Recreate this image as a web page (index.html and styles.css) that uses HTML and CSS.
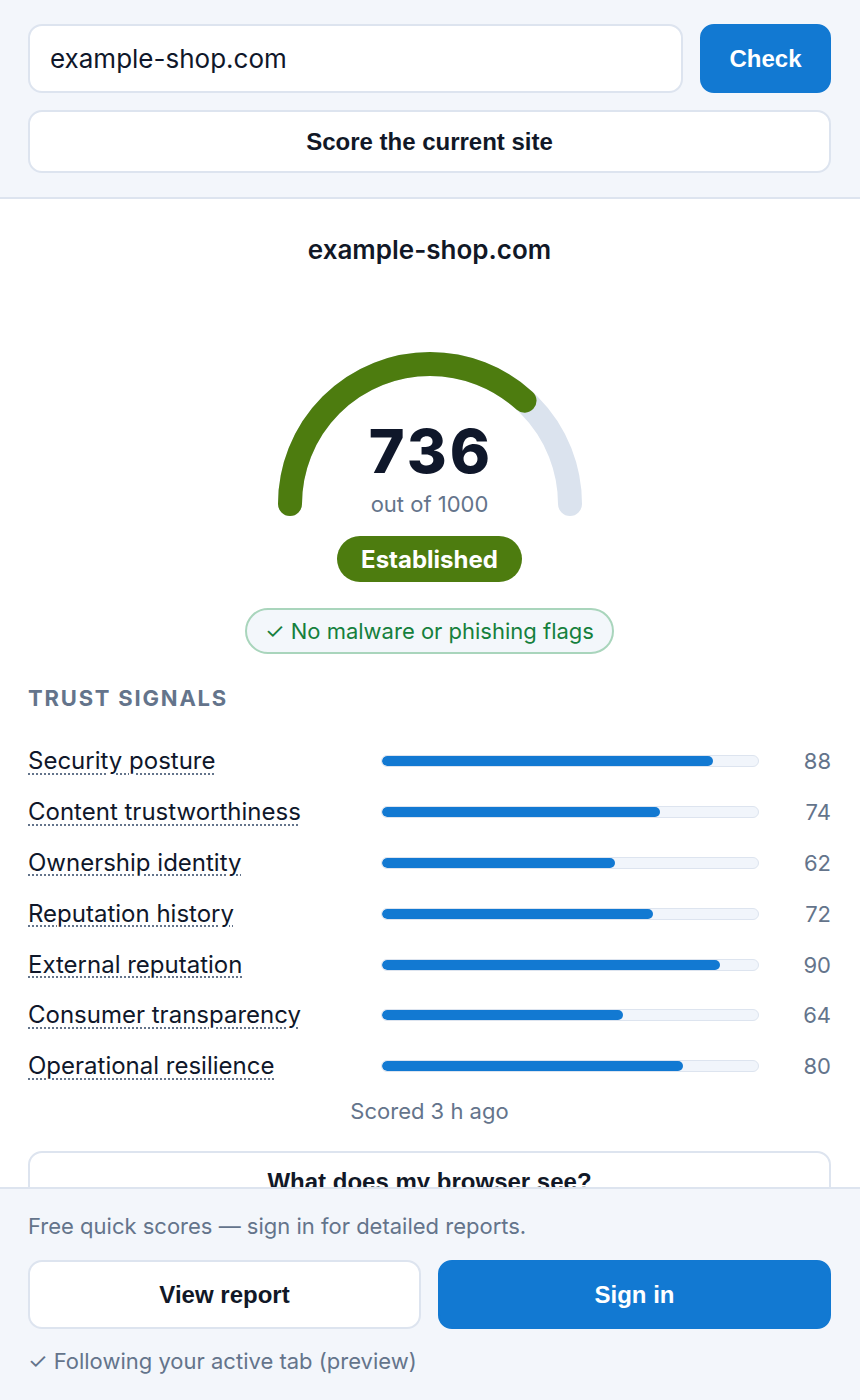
FILE: index.html
```html
<!DOCTYPE html>
<html lang="en">
<head>
    <meta charset="UTF-8">
    <meta name="viewport" content="width=device-width, initial-scale=1.0">
    <title>Site Trust Score</title>
    <link rel="stylesheet" href="styles.css">
</head>
<body>
    <header class="lookup">
        <div class="lookup-row">
            <input class="domain-input" type="text" value="example-shop.com">
            <button class="btn btn-primary check-btn">Check</button>
        </div>
        <button class="btn btn-outline wide-btn">Score the current site</button>
    </header>

    <main class="result">
        <h1 class="domain">example-shop.com</h1>

        <div class="gauge">
            <svg class="gauge-arc" width="304" height="164" viewBox="0 0 304 164">
                <!-- track, then the filled part (736 / 1000 of the half circle) -->
                <path d="M 12 152 A 140 140 0 0 1 292 152" fill="none" stroke="#dbe3ee" stroke-width="24" stroke-linecap="round"/>
                <path d="M 12 152 A 140 140 0 0 1 292 152" fill="none" stroke="#4d7c0f" stroke-width="24" stroke-linecap="round"
                      pathLength="1000" stroke-dasharray="736 1000"/>
            </svg>
            <div class="gauge-value">
                <div class="score">736</div>
                <div class="score-max">out of 1000</div>
            </div>
        </div>

        <div class="tier">Established</div>
        <div class="flags">✓ No malware or phishing flags</div>

        <h2 class="section-title">Trust signals</h2>
        <ul class="signals">
            <li class="signal">
                <span class="signal-name">Security posture</span>
                <span class="bar"><span class="bar-fill" style="width: 88%"></span></span>
                <span class="signal-value">88</span>
            </li>
            <li class="signal">
                <span class="signal-name">Content trustworthiness</span>
                <span class="bar"><span class="bar-fill" style="width: 74%"></span></span>
                <span class="signal-value">74</span>
            </li>
            <li class="signal">
                <span class="signal-name">Ownership identity</span>
                <span class="bar"><span class="bar-fill" style="width: 62%"></span></span>
                <span class="signal-value">62</span>
            </li>
            <li class="signal">
                <span class="signal-name">Reputation history</span>
                <span class="bar"><span class="bar-fill" style="width: 72%"></span></span>
                <span class="signal-value">72</span>
            </li>
            <li class="signal">
                <span class="signal-name">External reputation</span>
                <span class="bar"><span class="bar-fill" style="width: 90%"></span></span>
                <span class="signal-value">90</span>
            </li>
            <li class="signal">
                <span class="signal-name">Consumer transparency</span>
                <span class="bar"><span class="bar-fill" style="width: 64%"></span></span>
                <span class="signal-value">64</span>
            </li>
            <li class="signal">
                <span class="signal-name">Operational resilience</span>
                <span class="bar"><span class="bar-fill" style="width: 80%"></span></span>
                <span class="signal-value">80</span>
            </li>
        </ul>

        <p class="scored-at">Scored 3 h ago</p>

        <button class="btn btn-outline wide-btn">What does my browser see?</button>
    </main>

    <footer class="account">
        <p class="account-note">Free quick scores — sign in for detailed reports.</p>
        <div class="account-actions">
            <button class="btn btn-outline">View report</button>
            <button class="btn btn-primary">Sign in</button>
        </div>
        <p class="account-note">✓ Following your active tab (preview)</p>
    </footer>
</body>
</html>
```

FILE: styles.css
```css
* {
    box-sizing: border-box;
}

body {
    margin: 0;
    background: #ffffff;
    color: #0f172a;
    font-family: Inter, "Noto Sans", sans-serif;
    height: 1400px;
    overflow: hidden;
}

/* buttons */
.btn {
    font-family: "Liberation Sans", Arial, sans-serif;
    font-weight: 700;
    font-size: 24px;
    border-radius: 14px;
    cursor: pointer;
}

.btn-primary {
    background: #1279d2;
    color: #ffffff;
    border: 2px solid #1279d2;
}

.btn-outline {
    background: #ffffff;
    color: #111827;
    border: 2px solid #dde4ef;
}

.wide-btn {
    width: 100%;
    height: 63px;
}

/* top lookup bar */
.lookup {
    background: #f3f6fb;
    border-bottom: 2px solid #dde4ef;
    padding: 24px 29px 24px 28px;
    display: flex;
    flex-direction: column;
    gap: 17px;
}

.lookup-row {
    display: flex;
    gap: 17px;
}

.domain-input {
    flex: 1;
    height: 69px;
    padding: 0 20px;
    border: 2px solid #dde4ef;
    border-radius: 14px;
    font-family: Inter, sans-serif;
    font-size: 26px;
    color: #0f172a;
    background: #ffffff;
    outline: none;
}

.check-btn {
    width: 131px;
    height: 69px;
}

/* result */
.result {
    padding: 34px 29px 0 28px;
    display: flex;
    flex-direction: column;
    align-items: center;
}

.domain {
    margin: 0;
    font-size: 26px;
    font-weight: 600;
    color: #111827;
    line-height: 34px;
}

.gauge {
    position: relative;
    margin-top: 85px;
    width: 304px;
    height: 164px;
}

.gauge-arc {
    display: block;
}

.gauge-value {
    position: absolute;
    left: 0;
    right: 0;
    top: 67px;
    text-align: center;
}

.score {
    font-size: 61px;
    font-weight: 800;
    line-height: 64px;
    letter-spacing: 3px;
    text-indent: 3px;
    color: #0f172a;
}

.score-max {
    margin-top: 6px;
    font-size: 22px;
    line-height: 30px;
    color: #64748b;
}

.tier {
    margin-top: 20px;
    height: 46px;
    padding: 0 24px;
    display: flex;
    align-items: center;
    border-radius: 23px;
    background: #4d7c0f;
    color: #ffffff;
    font-size: 24px;
    font-weight: 700;
}

.flags {
    margin-top: 26px;
    height: 46px;
    padding: 0 18px;
    display: flex;
    align-items: center;
    border: 2px solid #a9d5bc;
    border-radius: 23px;
    background: #f3f7fb;
    color: #15803d;
    font-size: 22px;
}

.section-title {
    align-self: stretch;
    margin: 30px 0 0;
    font-size: 22px;
    font-weight: 700;
    line-height: 28px;
    letter-spacing: 1.8px;
    text-transform: uppercase;
    color: #64748b;
}

.signals {
    align-self: stretch;
    list-style: none;
    margin: 24px 0 0;
    padding: 0;
}

.signal {
    display: grid;
    grid-template-columns: 353px 378px 1fr;
    align-items: center;
    height: 50.8px;
}

.signal-name {
    justify-self: start;
    font-size: 24px;
    line-height: 30px;
    color: #0f172a;
    text-decoration: underline dotted #64748b;
    text-decoration-thickness: 2px;
    text-underline-offset: 4px;
}

.bar {
    display: block;
    height: 12px;
    border: 1.5px solid #dde4ef;
    border-radius: 6px;
    background: #f1f5fb;
    overflow: hidden;
}

.bar-fill {
    display: block;
    height: 100%;
    border-radius: 5px;
    background: #1279d2;
}

.signal-value {
    text-align: right;
    font-size: 22px;
    color: #64748b;
}

.scored-at {
    margin: 4px 0 0;
    font-size: 22px;
    line-height: 30px;
    color: #64748b;
}

.result .wide-btn {
    margin-top: 25px;
}

/* account footer pinned to the bottom of the popup */
.account {
    position: fixed;
    left: 0;
    right: 0;
    bottom: 0;
    height: 213px;
    background: #f3f6fb;
    border-top: 2px solid #dde4ef;
    padding: 22px 29px 0 28px;
}

.account-note {
    margin: 0;
    font-size: 22px;
    line-height: 30px;
    color: #64748b;
}

.account-actions {
    display: grid;
    grid-template-columns: 1fr 1fr;
    gap: 17px;
    margin: 19px 0 17px;
}

.account-actions .btn {
    height: 69px;
}
```
